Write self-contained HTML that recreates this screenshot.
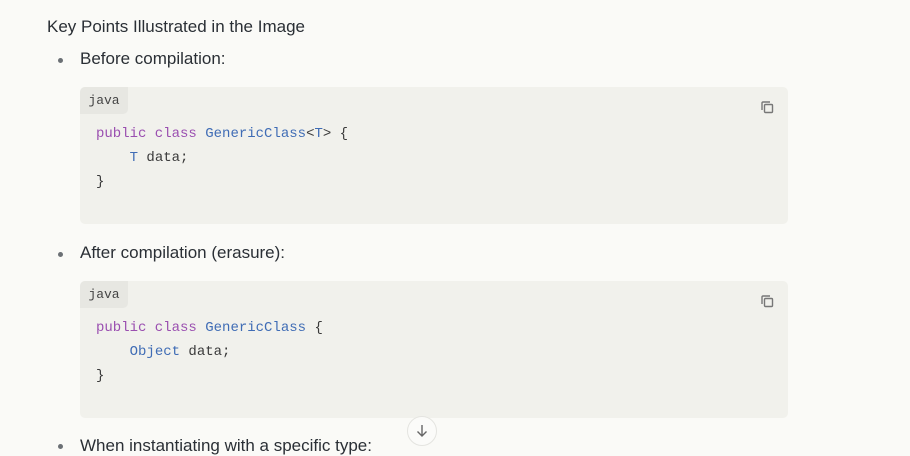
<!DOCTYPE html>
<html><head><style>
body{margin:0;width:910px;height:453px;overflow:hidden;background:#fafaf7;font-family:"Liberation Sans",sans-serif;color:#2a2f35;position:relative}
.t{position:absolute;font-size:17px;white-space:nowrap}
.dot{position:absolute;width:5px;height:5px;border-radius:50%;background:#6b7075}
.blk{position:absolute;left:80px;width:708px;height:137px;background:#f1f1ec;border-radius:5px}
.lab{position:absolute;left:0;top:0;width:48px;height:27px;background:#e7e7e2;border-radius:5px 0 5px 0;font:13px "Liberation Mono",monospace;color:#444;line-height:27px;text-align:center}
.code{position:absolute;left:16px;top:35px;font:14px/24px "Liberation Mono",monospace;color:#3a3a3a;white-space:pre}
.k{color:#9a4fb0}.c{color:#3f6cb5}
.cp{position:absolute;right:14px;top:13px}
</style></head><body>
<div class="t" style="left:47px;top:17px">Key Points Illustrated in the Image</div>
<div class="dot" style="left:58px;top:58px"></div>
<div class="t" style="left:80px;top:49px">Before compilation:</div>
<div class="blk" style="top:87px"><div class="lab">java</div>
<div class="code"><span class="k">public class</span> <span class="c">GenericClass</span>&lt;<span class="c">T</span>&gt; {
    <span class="c">T</span> data;
}</div>
<svg class="cp" width="14" height="14" viewBox="0 0 14 14" fill="none" stroke="#777" stroke-width="1.4"><path d="M2 10V3a1 1 0 0 1 1-1h7"/><rect x="4.5" y="4.5" width="8" height="8" rx="1"/></svg></div>
<div class="dot" style="left:58px;top:252px"></div>
<div class="t" style="left:80px;top:243px">After compilation (erasure):</div>
<div class="blk" style="top:281px"><div class="lab">java</div>
<div class="code"><span class="k">public class</span> <span class="c">GenericClass</span> {
    <span class="c">Object</span> data;
}</div>
<svg class="cp" width="14" height="14" viewBox="0 0 14 14" fill="none" stroke="#777" stroke-width="1.4"><path d="M2 10V3a1 1 0 0 1 1-1h7"/><rect x="4.5" y="4.5" width="8" height="8" rx="1"/></svg></div>
<div class="dot" style="left:58px;top:444px"></div>
<div class="t" style="left:80px;top:436px">When instantiating with a specific type:</div>
<div style="position:absolute;left:407px;top:416px;width:30px;height:30px;border-radius:50%;background:#fbfbf9;border:1px solid #e4e4e0;box-sizing:border-box"><svg width="30" height="30" viewBox="0 0 30 30" fill="none" stroke="#666" stroke-width="1.4" style="position:absolute;left:-1px;top:-1px"><path d="M15 9v11M10.5 15.5 15 20l4.5-4.5"/></svg></div>
</body></html>
